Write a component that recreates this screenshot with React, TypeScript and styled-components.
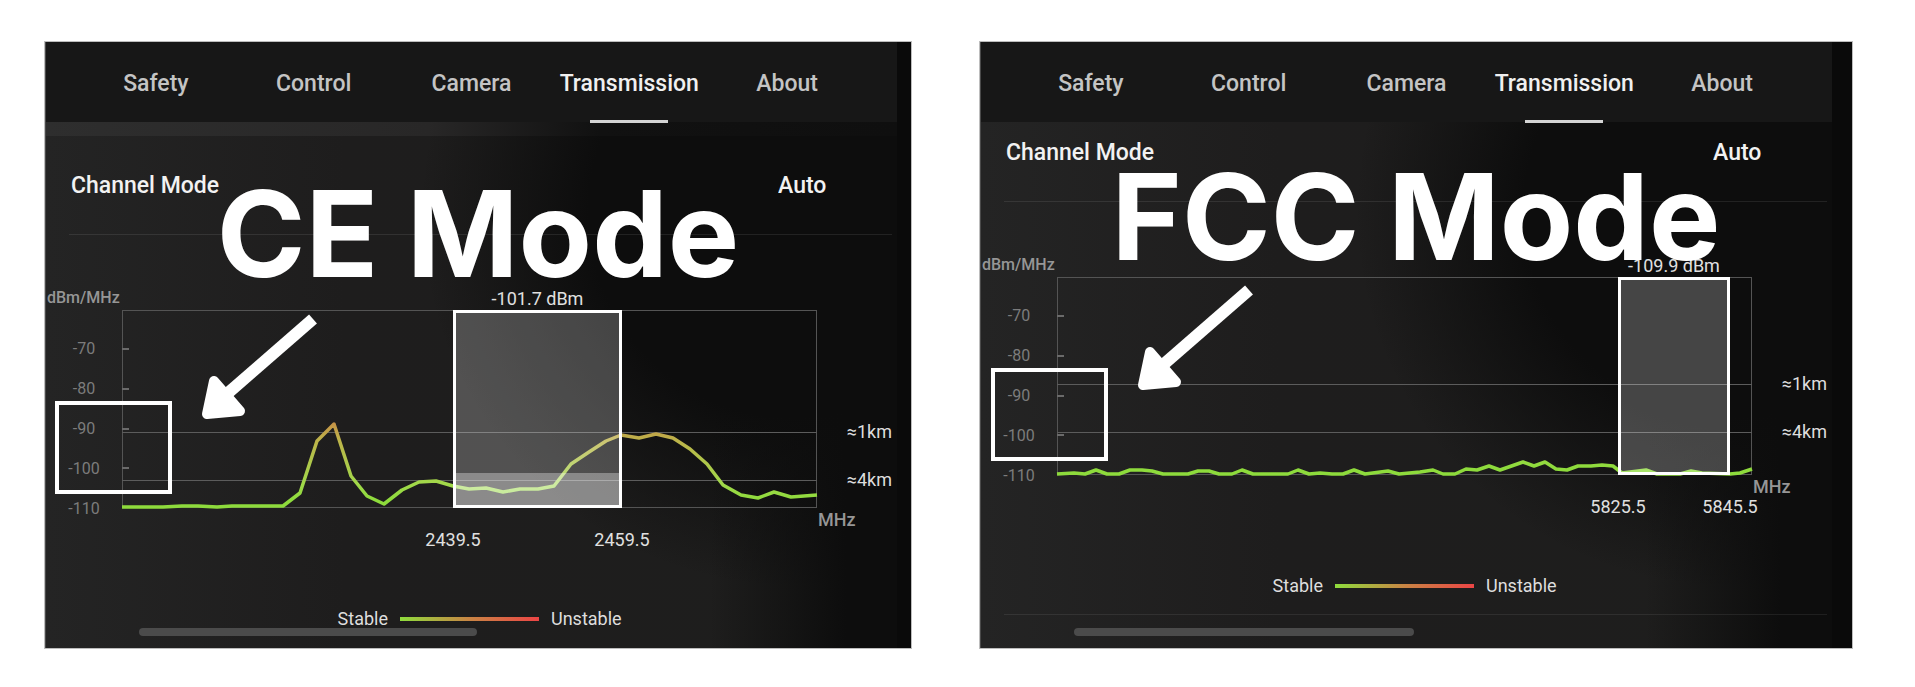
import React from "react";
import styled, { createGlobalStyle } from "styled-components";

type Point = [number, number];

interface PanelData {
  id: string;
  title: string;
  titleTop: number;
  scroll: number;
  edge: number;
  annotationLeft: number;
  annotationTop: number;
  arrowTop: number;
  band: { from: number; to: number; fill: number };
  power: string;
  frequencies: [string, string];
  limits: { label: string; at: number }[];
  trace: Point[];
  more: boolean;
}

const PLOT_W = 695;
const PLOT_H = 198;

const ceTrace: Point[] = [
  [0, 197], [41, 197], [60, 196], [76, 196], [95, 197], [110, 196], [126, 196], [146, 196], [161, 196],
  [178, 183], [195, 131], [212, 114], [229, 166], [245, 186], [262, 194], [280, 180], [297, 172],
  [314, 171], [331, 176], [347, 179], [364, 178], [381, 182], [398, 179], [416, 179], [432, 176],
  [449, 154], [467, 142], [484, 131], [499, 125], [517, 128], [534, 124], [551, 128], [568, 139],
  [585, 154], [601, 175], [619, 185], [636, 188], [652, 182], [669, 187], [695, 185],
];

const fccTrace: Point[] = [
  [0, 197], [17, 196], [28, 197], [39, 193], [50, 197], [62, 197], [73, 193], [85, 193], [95, 194],
  [106, 197], [131, 197], [141, 194], [152, 194], [162, 197], [175, 197], [185, 193], [196, 197],
  [231, 197], [241, 193], [252, 197], [263, 196], [275, 197], [286, 197], [297, 193], [308, 197],
  [331, 194], [342, 197], [363, 195], [376, 193], [386, 197], [398, 197], [409, 192], [420, 193],
  [432, 189], [443, 193], [466, 185], [477, 189], [488, 185], [499, 192], [510, 193], [521, 189],
  [534, 189], [545, 188], [556, 189], [565, 196], [589, 193], [600, 197], [623, 197], [634, 194],
  [645, 196], [673, 197], [683, 196], [695, 192],
];

const panels: PanelData[] = [
  {
    id: "ce",
    title: "CE Mode",
    titleTop: 132,
    scroll: 14,
    edge: 14,
    annotationLeft: 10,
    annotationTop: 359,
    arrowTop: 268,
    band: { from: 331, to: 500, fill: 35 },
    power: "-101.7 dBm",
    frequencies: ["2439.5", "2459.5"],
    limits: [{ label: "≈1km", at: 122 }, { label: "≈4km", at: 170 }],
    trace: ceTrace,
    more: false,
  },
  {
    id: "fcc",
    title: "FCC Mode",
    titleTop: 115,
    scroll: -19,
    edge: 20,
    annotationLeft: 11,
    annotationTop: 326,
    arrowTop: 239,
    band: { from: 561, to: 673, fill: 0 },
    power: "-109.9 dBm",
    frequencies: ["5825.5", "5845.5"],
    limits: [{ label: "≈1km", at: 107 }, { label: "≈4km", at: 155 }],
    trace: fccTrace,
    more: true,
  },
];

const tabs = ["Safety", "Control", "Camera", "Transmission", "About"];
const levels = ["-70", "-80", "-90", "-100", "-110"];

const Global = createGlobalStyle`
  * { box-sizing: border-box; }
  body { margin: 0; background: #fff; font-family: Roboto, "Liberation Sans", sans-serif; }
`;

const Page = styled.main`
  display: grid;
  grid-template-columns: 866fr 872fr;
  gap: 69px;
  min-height: 100vh;
  padding: 42px 63px 39px 45px;
`;

const Panel = styled.section<{ $edge: number }>`
  position: relative;
  display: flex;
  min-width: 0;
  overflow: hidden;
  background: #0a0a0a;
  padding-right: ${(p) => p.$edge}px;
  box-shadow: 0 0 0 1px #bdbdbd;
`;

const Screen = styled.div`
  flex: 1;
  min-width: 0;
  display: flex;
  flex-direction: column;
  border-left: 1px solid #4a4a4a;
  background:
    linear-gradient(to right, transparent 78%, #0d0d0d 94%),
    radial-gradient(ellipse 44% 62% at 88% 28%, #0d0d0d 55%, transparent 100%),
    linear-gradient(to right, #242424, #1e1d1d 35%, #1e1e1d);
`;

const Tabs = styled.nav`
  display: grid;
  grid-template-columns: repeat(5, 1fr);
  height: 80px;
  padding: 0 31px;
  background: #171717;
`;

const Tab = styled.button<{ $active: boolean }>`
  position: relative;
  border: 0;
  padding: 3px 0 0;
  background: none;
  font: 500 23px/28px Roboto, sans-serif;
  color: ${(p) => (p.$active ? "#f0f0f0" : "#c4c4c4")};
  white-space: nowrap;

  &::after {
    content: "";
    display: ${(p) => (p.$active ? "block" : "none")};
    position: absolute;
    left: 50%;
    bottom: -1px;
    width: 78px;
    height: 3px;
    margin-left: -39px;
    background: #d4d4d4;
  }
`;

const Viewport = styled.div`
  flex: 1;
  min-height: 0;
  overflow: hidden;
`;

const Gap = styled.div`
  height: 14px;
  background: linear-gradient(to right, #2e2e2e, #282727 45%, #111 65%, #0f0f0f);
`;

const Scrolled = styled.div<{ $offset: number }>`
  margin-top: ${(p) => p.$offset}px;
`;

const Setting = styled.div`
  display: flex;
  align-items: center;
  justify-content: space-between;
  height: 99px;
  margin: 0 5px 0 23px;
  padding: 2px 65px 0 2px;
  border-bottom: 1px solid rgba(255, 255, 255, 0.09);
  font-size: 23px;
  font-weight: 500;
  line-height: 28px;
  color: #f2f2f2;
`;

const Choice = styled.select`
  appearance: none;
  border: 0;
  padding: 0;
  background: none;
  font: inherit;
  color: inherit;
`;

const ChartSection = styled.div<{ $ruled: boolean }>`
  margin: 0 5px 0 23px;
  padding: 51px 0 16px;
  border-bottom: ${(p) => (p.$ruled ? "1px solid rgba(255,255,255,0.08)" : "0")};
`;

const ChartGrid = styled.div`
  display: grid;
  grid-template-columns: 76px 1fr 75px;
  grid-template-rows: 24px ${PLOT_H}px 24px;
  margin-left: -23px;
`;

const AxisUnit = styled.span<{ $x?: boolean }>`
  grid-column: ${(p) => (p.$x ? 3 : 1)};
  grid-row: ${(p) => (p.$x ? 3 : 1)};
  padding-left: 1px;
  font-size: ${(p) => (p.$x ? 18 : 16)}px;
  font-weight: 500;
  line-height: 24px;
  color: #969696;
`;

const Levels = styled.ol`
  grid-column: 1;
  grid-row: 2;
  display: flex;
  flex-direction: column;
  margin: 0;
  padding: 19px 0 0;
  list-style: none;
  text-align: center;
  font-size: 16px;
  line-height: 40px;
  color: #7c7c7c;
`;

const Plot = styled.div`
  grid-column: 2;
  grid-row: 2;
  position: relative;

  svg { display: block; width: 100%; height: ${PLOT_H}px; overflow: visible; }
`;

const Limits = styled.div`
  grid-column: 3;
  grid-row: 2;
  position: relative;
`;

const Limit = styled.span`
  position: absolute;
  right: 0;
  margin-top: -12px;
  font-size: 18px;
  line-height: 24px;
  color: #dedede;
`;

const PlotLabel = styled.span<{ $above?: boolean }>`
  position: absolute;
  ${(p) => (p.$above ? "bottom: 100%; margin-bottom: -1px;" : "top: 100%; margin-top: 20px;")}
  transform: translateX(-50%);
  font-size: 18px;
  line-height: 24px;
  white-space: nowrap;
  color: #e0e0e0;
`;

const Legend = styled.div`
  display: grid;
  grid-template-columns: 1fr 139px 1fr;
  align-items: center;
  gap: 12px;
  margin: 75px 75px 0 53px;
  font-size: 18px;
  line-height: 24px;
  color: #dedede;

  span:first-child { text-align: right; }
`;

const Ramp = styled.div`
  height: 4px;
  background: linear-gradient(to right, #8fdc3c, #c98544 50%, #ec4545);
`;

const Thumb = styled.div`
  position: absolute;
  left: 94px;
  bottom: 12px;
  width: 39%;
  height: 8px;
  border-radius: 4px;
  background: #4b4b4b;
`;

const Title = styled.h2<{ $top: number }>`
  position: absolute;
  top: ${(p) => p.$top}px;
  left: 0;
  right: 0;
  margin: 0;
  text-align: center;
  white-space: nowrap;
  font: 700 120px/120px Inter, "Liberation Sans", sans-serif;
  color: #fff;
`;

const Focus = styled.div<{ $left: number; $top: number }>`
  position: absolute;
  left: ${(p) => p.$left}px;
  top: ${(p) => p.$top}px;
  width: 117px;
  height: 93px;
  border: 4px solid #fff;
`;

const Arrow = styled.svg<{ $left: number; $top: number }>`
  position: absolute;
  left: ${(p) => p.$left}px;
  top: ${(p) => p.$top}px;
`;

const pct = (x: number) => `${(x / PLOT_W) * 100}%`;

function Spectrum({ data }: { data: PanelData }) {
  const { band, trace, limits, id } = data;
  return (
    <svg viewBox={`0 0 ${PLOT_W} ${PLOT_H}`} preserveAspectRatio="none" role="img" aria-label={`${data.title} spectrum`}>
      <defs>
        <linearGradient id={`trace-${id}`} gradientUnits="userSpaceOnUse" x1="0" x2="0" y1="105" y2="190">
          <stop offset="0" stopColor="#c98245" />
          <stop offset="0.3" stopColor="#bdb44a" />
          <stop offset="0.8" stopColor="#a2d84a" />
          <stop offset="1" stopColor="#8edb3c" />
        </linearGradient>
      </defs>
      <rect x="0.5" y="0.5" width={PLOT_W - 1} height={PLOT_H - 1} fill="none" stroke="#545454" />
      {[39, 79, 119, 158].map((y) => (
        <path key={y} d={`M0 ${y}H7`} stroke="#6a6a6a" strokeWidth="2" />
      ))}
      {limits.map((l) => (
        <path key={l.label} d={`M0 ${l.at}.5H${PLOT_W}`} stroke="#5c5c5c" />
      ))}
      <polyline points={trace.map((p) => p.join(",")).join(" ")} fill="none" stroke={`url(#trace-${id})`} strokeWidth="3.5" strokeLinejoin="round" />
      <rect x={band.from} y="1" width={band.to - band.from} height={PLOT_H - 2} fill="#fff" fillOpacity="0.23" />
      <rect x={band.from} y={PLOT_H - band.fill} width={band.to - band.from} height={band.fill} fill="#fff" fillOpacity="0.33" />
      <rect x={band.from + 1.5} y="1.5" width={band.to - band.from - 3} height={PLOT_H - 3} fill="none" stroke="#fff" strokeWidth="3" />
    </svg>
  );
}

function ModePanel({ data }: { data: PanelData }) {
  const { band } = data;
  return (
    <Panel $edge={data.edge}>
      <Screen>
        <Tabs>
          {tabs.map((t) => (
            <Tab key={t} type="button" $active={t === "Transmission"}>{t}</Tab>
          ))}
        </Tabs>
        <Viewport>
          {data.scroll > 0 && <Gap />}
          <Scrolled $offset={Math.min(data.scroll, 0)}>
            <Setting>
              <label htmlFor={`channel-${data.id}`}>Channel Mode</label>
              <Choice id={`channel-${data.id}`} defaultValue="Auto">
                <option>Auto</option>
              </Choice>
            </Setting>
            <ChartSection $ruled={data.more}>
              <ChartGrid>
                <AxisUnit>dBm/MHz</AxisUnit>
                <Levels>
                  {levels.map((l) => <li key={l}>{l}</li>)}
                </Levels>
                <Plot>
                  <Spectrum data={data} />
                  <PlotLabel $above style={{ left: pct((band.from + band.to) / 2) }}>{data.power}</PlotLabel>
                  <PlotLabel style={{ left: pct(band.from) }}>{data.frequencies[0]}</PlotLabel>
                  <PlotLabel style={{ left: pct(band.to) }}>{data.frequencies[1]}</PlotLabel>
                </Plot>
                <Limits>
                  {data.limits.map((l) => (
                    <Limit key={l.label} style={{ top: l.at }}>{l.label}</Limit>
                  ))}
                </Limits>
                <AxisUnit $x>MHz</AxisUnit>
              </ChartGrid>
              <Legend>
                <span>Stable</span>
                <Ramp />
                <span>Unstable</span>
              </Legend>
            </ChartSection>
          </Scrolled>
        </Viewport>
      </Screen>
      <Thumb />
      <Focus $left={data.annotationLeft} $top={data.annotationTop} />
      <Arrow $left={data.annotationLeft + 143} $top={data.arrowTop} width="124" height="116" viewBox="0 0 124 116" aria-hidden="true">
        <path d="M115 9L30 83" stroke="#fff" strokeWidth="12" />
        <path d="M16 71L9 104L42 101Z" fill="#fff" stroke="#fff" strokeWidth="10" strokeLinejoin="round" />
      </Arrow>
      <Title $top={data.titleTop}>{data.title}</Title>
    </Panel>
  );
}

export default function App() {
  return (
    <>
      <Global />
      <Page>
        {panels.map((p) => <ModePanel key={p.id} data={p} />)}
      </Page>
    </>
  );
}
